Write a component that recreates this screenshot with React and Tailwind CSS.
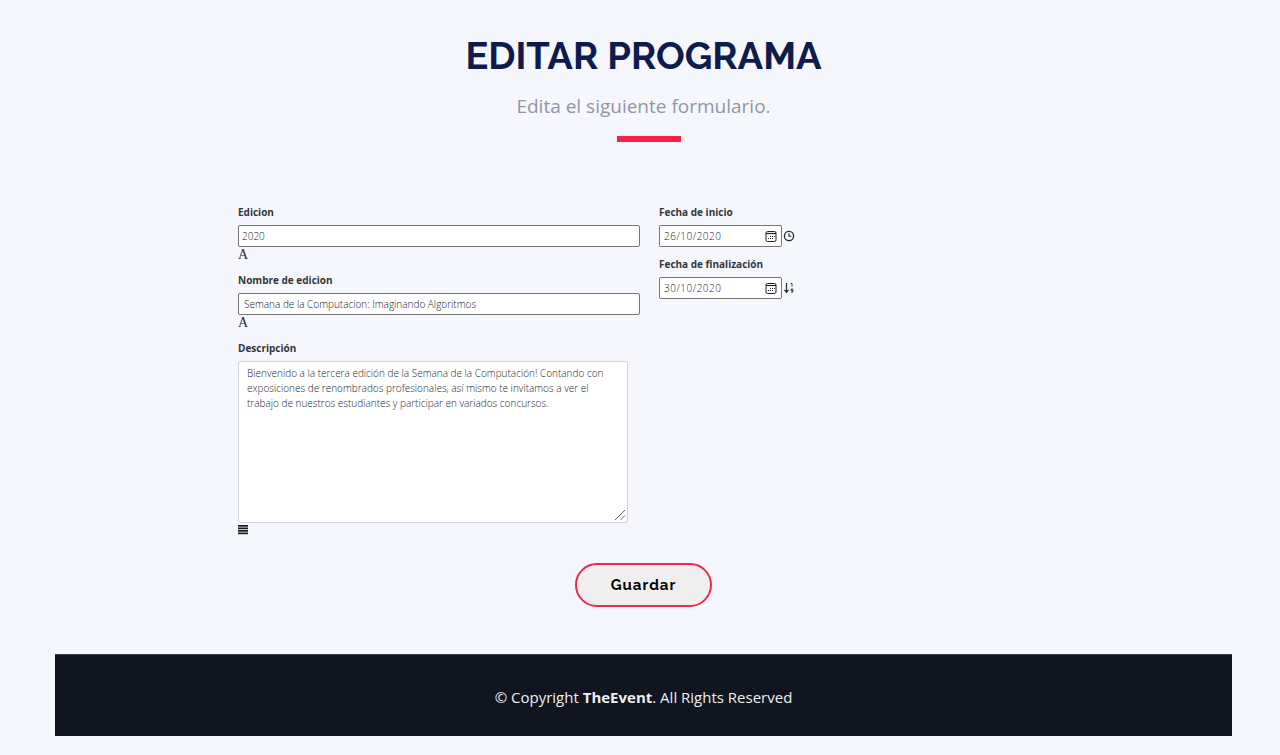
import { useState } from "react";

function LetterIcon() {
  return (
    <span aria-hidden="true" className="block h-[15px] font-['Liberation_Serif',serif] text-sm leading-[15px] text-[#2a2c30]">
      A
    </span>
  );
}

function CalendarIcon() {
  return (
    <svg viewBox="0 0 12 12" className="size-3" fill="none" stroke="#222" aria-hidden="true">
      <rect x="1" y="1.5" width="10" height="10" rx="1.5" />
      <path d="M1 3.5H11" strokeWidth="1.2" />
      <path d="M5 6.5h1M7 6.5h1M9 6.5h.8M3 8.5h1M5 8.5h1M7 8.5h1" strokeWidth="1.2" />
    </svg>
  );
}

function ClockIcon() {
  return (
    <svg viewBox="0 0 12 12" className="size-3" fill="none" stroke="#25272b" strokeWidth="1.3" aria-hidden="true">
      <circle cx="6" cy="6" r="4.6" />
      <path d="M6 3.3V6.2H8.3" strokeWidth="1.1" />
    </svg>
  );
}

function SortIcon() {
  return (
    <svg viewBox="0 0 12 12" className="size-3" fill="none" stroke="#25272b" aria-hidden="true">
      <path d="M3.5 1V10M1.5 8L3.5 10.3L5.5 8" strokeWidth="1.2" />
      <path d="M7.6 1.5H9V4.6" strokeWidth="0.9" />
      <path d="M9.8 8.6H8.1V7H9.8V10.2H8" strokeWidth="0.9" />
    </svg>
  );
}

function LinesIcon() {
  return (
    <svg viewBox="0 0 10 10" className="mt-0.5 h-2.5 w-2.5" fill="#17191d" aria-hidden="true">
      <rect y="0" width="10" height="1.7" />
      <rect y="2.5" width="10" height="1.7" />
      <rect y="5" width="10" height="1.7" />
      <rect y="7.5" width="10" height="1.7" />
    </svg>
  );
}

const labelClass = "mb-1 block text-[10px] leading-[18px] font-bold text-[#32353a]";
const inputClass = "block h-[22px] rounded-xs border border-[#767676] bg-white text-[10px] font-light text-[#17191d]";

function TextField({ id, label, value, padding }) {
  const [text, setText] = useState(value);
  return (
    <div>
      <label htmlFor={id} className={labelClass}>{label}</label>
      <input id={id} type="text" value={text} onChange={(e) => setText(e.target.value)} className={`${inputClass} w-full ${padding}`} />
      <LetterIcon />
    </div>
  );
}

function DateField({ id, label, value, children }) {
  const [text, setText] = useState(value);
  return (
    <div>
      <label htmlFor={id} className={labelClass}>{label}</label>
      <div className="flex items-center gap-px">
        <div className={`${inputClass} flex w-[123px] items-center px-1`}>
          <input id={id} type="text" inputMode="numeric" value={text} onChange={(e) => setText(e.target.value)} className="w-0 grow tracking-[0.5px] outline-none" />
          <button type="button" aria-label={`Elegir ${label}`}><CalendarIcon /></button>
        </div>
        {children}
      </div>
    </div>
  );
}

export default function App() {
  return (
    <div className="min-h-screen bg-[#f6f7fd] pr-12 pb-[19px] pl-[55px] font-['Open_Sans',sans-serif]">
      <header className="flex flex-col items-center pt-8">
        <h1 className="font-['Raleway',sans-serif] text-[38px] leading-[48px] font-bold text-[#0e1b4d]">EDITAR PROGRAMA</h1>
        <p className="mt-3 text-[19px] leading-7 text-[#9195a2]">Edita el siguiente formulario.</p>
        <div className="mt-4 pl-[11px]"><div className="h-[6px] w-16 bg-[#f82249]" /></div>
      </header>

      <main>
        <form onSubmit={(e) => e.preventDefault()} className="pt-[61px]">
          <div className="flex gap-[19px] pl-[183px]">
            <div className="flex w-[402px] flex-col gap-[9px]">
              <TextField id="edicion" label="Edicion" value="2020" padding="px-[3px]" />
              <TextField id="nombre" label="Nombre de edicion" value="Semana de la Computacion: Imaginando Algoritmos" padding="px-[5px]" />
              <div>
                <label htmlFor="descripcion" className={labelClass}>Descripción</label>
                <div className="relative w-fit">
                  <textarea
                    id="descripcion"
                    className="block h-[162px] w-[390px] rounded-[3px] border border-[#ced4da] bg-white px-2 py-1 text-[10px] leading-[15px] font-light text-[#25292e] [&::-webkit-resizer]:hidden"
                    defaultValue="Bienvenido a la tercera edición de la Semana de la Computación! Contando con exposiciones de renombrados profesionales, así mismo te invitamos a ver el trabajo de nuestros estudiantes y participar en variados concursos."
                  />
                  <svg viewBox="0 0 12 12" className="pointer-events-none absolute right-0.5 bottom-0.5 size-3" stroke="#555" fill="none" aria-hidden="true">
                    <path d="M1 11L11 1M6.5 11L11 6.5" strokeWidth="0.9" />
                  </svg>
                </div>
                <LinesIcon />
              </div>
            </div>
            <div className="flex flex-col gap-2">
              <DateField id="inicio" label="Fecha de inicio" value="26/10/2020"><ClockIcon /></DateField>
              <DateField id="fin" label="Fecha de finalización" value="30/10/2020"><SortIcon /></DateField>
            </div>
          </div>
          <div className="mt-7 flex justify-center">
            <button type="submit" className="h-11 rounded-full border-2 border-[#e62b50] bg-[#efefef] px-[34px] font-['Raleway',sans-serif] text-[15px] font-bold tracking-[1px] text-black">
              Guardar
            </button>
          </div>
        </form>
      </main>

      <footer className="mt-[47px] border-t border-[#3a404a] bg-[#101520] pt-[33px] pb-[30px] text-center text-[15px] leading-[18px] text-[#eeeeee]">
        © Copyright <strong>TheEvent</strong>. All Rights Reserved
      </footer>
    </div>
  );
}
